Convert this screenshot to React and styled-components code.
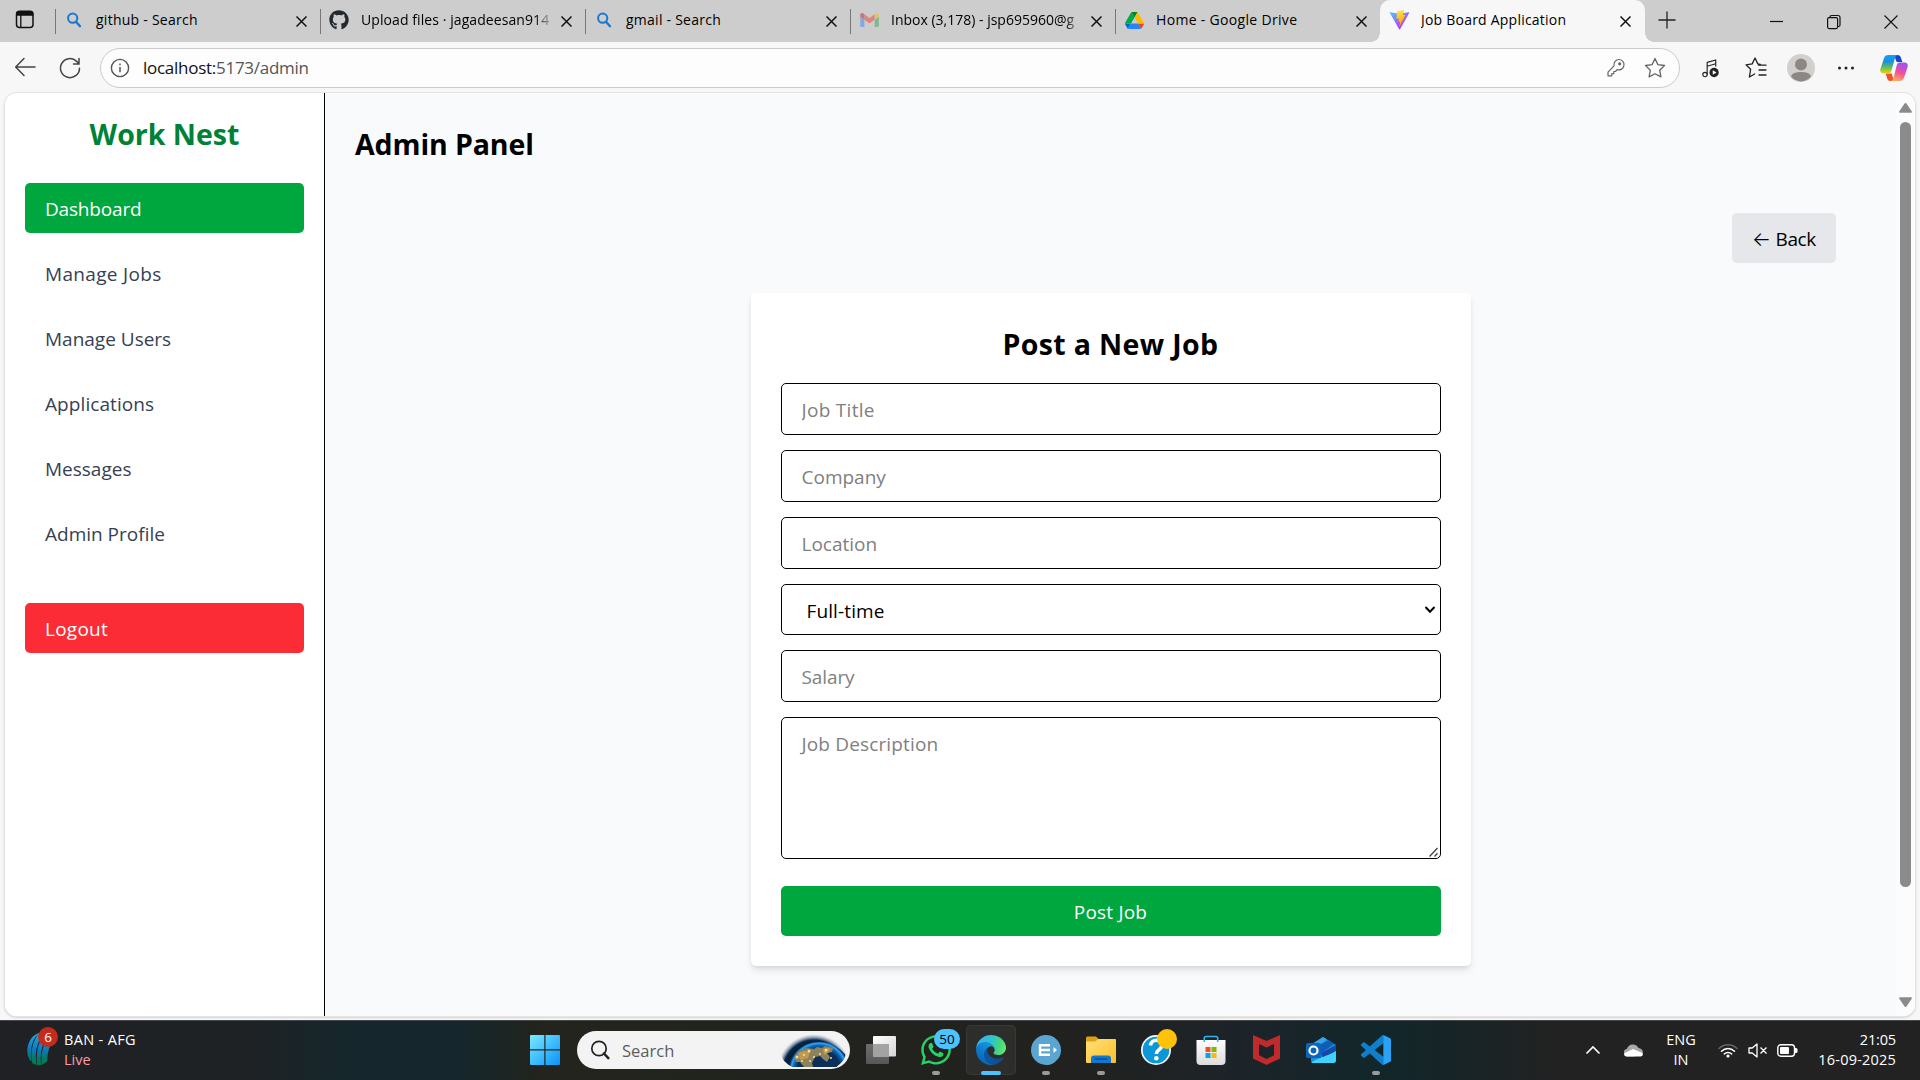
import React from "react";
import styled, { createGlobalStyle } from "styled-components";
import { FaGithub, FaWhatsapp } from "react-icons/fa";

const GlobalStyle = createGlobalStyle`
  *, *::before, *::after { box-sizing: border-box; }
  html, body { margin: 0; padding: 0; overflow: hidden; }
  body { font-family: "Open Sans", "Noto Sans", sans-serif; color: #000; }
  button, input, select, textarea { font: inherit; margin: 0; }
`;

const Screen = styled.div`
  width: 1920px;
  height: 1080px;
  display: flex;
  flex-direction: column;
  background: #f7f7f7;
`;

const T = styled.span`
  letter-spacing: ${(p) => p.$ls || 0}px;
`;

/* ---------- tab strip ---------- */
const TabStrip = styled.header`
  height: 42px;
  flex: none;
  display: flex;
  background: #cdcdcd;
`;
const TabActions = styled.div`
  width: 55px;
  display: flex;
  align-items: center;
  padding: 0 0 4px 15px;
`;
const Tab = styled.div`
  position: relative;
  width: 265px;
  height: 42px;
  display: flex;
  align-items: center;
  padding: 0 ${(p) => (p.$active ? 11 : 10)}px 2px 8px;
  background: ${(p) => (p.$active ? "#f7f7f7" : "transparent")};
  border-radius: 10px 10px 0 0;
  &::before {
    content: "";
    position: absolute;
    ${(p) =>
      p.$active
        ? "left: -9px; bottom: 0; width: 9px; height: 9px; background: radial-gradient(circle at 0 0, transparent 8.5px, #f7f7f7 9px);"
        : "left: 0; top: 9px; width: 1px; height: 25px; background: #777;"}
  }
  &::after {
    content: "";
    display: ${(p) => (p.$active ? "block" : "none")};
    position: absolute;
    right: -9px;
    bottom: 0;
    width: 9px;
    height: 9px;
    background: radial-gradient(circle at 100% 0, transparent 8.5px, #f7f7f7 9px);
  }
`;
const TabIcon = styled.span`
  width: 22px;
  height: 22px;
  flex: none;
  display: grid;
  place-items: center;
`;
const TabTitle = styled.span`
  flex: 1;
  margin-left: 11px;
  margin-right: 5px;
  height: 22px;
  line-height: 21px;
  font-size: 14px;
  letter-spacing: ${(p) => p.$ls || 0}px;
  white-space: nowrap;
  overflow: hidden;
  mask-image: ${(p) => (p.$fade ? "linear-gradient(90deg,#000 91%,transparent 101%)" : "none")};
`;
const TabClose = styled.span`
  width: 18px;
  height: 22px;
  display: grid;
  place-items: center;
  padding-top: 2px;
`;
const WindowTools = styled.div`
  flex: 1;
  display: flex;
  align-items: center;
  justify-content: space-between;
  padding: 0 20px 2px 13px;
`;
const WindowButtons = styled.div`
  display: flex;
  gap: 39px;
  padding-top: 3px;
`;

/* ---------- toolbar ---------- */
const Toolbar = styled.div`
  height: 51px;
  flex: none;
  display: flex;
  align-items: center;
  padding: 1px 0 0 13px;
`;
const NavButtons = styled.div`
  width: 87px;
  flex: none;
  display: flex;
  gap: 21px;
`;
const AddressBar = styled.div`
  width: 1580px;
  flex: none;
  height: 40px;
  display: flex;
  align-items: center;
  padding: 0 13px 0 9px;
  background: #fdfdfd;
  border: 1px solid #cbcbcb;
  border-radius: 20px;
`;
const Url = styled.span`
  flex: 1;
  margin-left: 13px;
  font-size: 17px;
  line-height: 24px;
  color: #555;
  letter-spacing: -0.27px;
  b { font-weight: 400; color: #111; }
`;
const BarIcons = styled.div`
  display: flex;
  gap: 18px;
`;
const ToolIcons = styled.div`
  flex: none;
  display: flex;
  padding-left: 8px;
`;
const ToolSlot = styled.span`
  width: 45px;
  height: 30px;
  margin-left: ${(p) => p.$push || 0}px;
  display: grid;
  place-items: center;
`;

/* ---------- page ---------- */
const Viewport = styled.div`
  flex: none;
  height: 923px;
  margin: 0 5px 4px;
  display: flex;
  overflow: hidden;
  background: #f9fafb;
  border-radius: 12px;
  box-shadow: 0 0 0 1px #e4e4e4, 0 1px 2px 1px #d4d4d4;
`;
const Sidebar = styled.aside`
  width: 320px;
  display: flex;
  flex-direction: column;
  padding: 20px;
  background: #fff;
  border-right: 1px solid #000;
`;
const Brand = styled.h2`
  margin: 0 0 30px;
  height: 40px;
  line-height: 42px;
  font-size: 28.5px;
  font-weight: 700;
  text-align: center;
  color: #008236;
`;
const NavList = styled.nav`
  display: flex;
  flex-direction: column;
  gap: 15px;
  margin-bottom: 45px;
`;
const NavItem = styled.a`
  height: 50px;
  padding: 0 20px;
  line-height: 53px;
  font-size: 19px;
  letter-spacing: ${(p) => p.$ls || 0}px;
  border-radius: 5px;
  color: ${(p) => (p.$bg ? "#fff" : "#364153")};
  background: ${(p) => p.$bg || "transparent"};
`;
const Main = styled.main`
  flex: 1;
  display: flex;
  flex-direction: column;
  padding: 30px 60px 0 30px;
`;
const PageTitle = styled.h1`
  margin: 0 0 50px;
  height: 40px;
  line-height: 42px;
  font-size: 28.5px;
  font-weight: 700;
`;
const BackButton = styled.button`
  align-self: flex-end;
  width: 104px;
  height: 50px;
  padding: 2px 20px 0;
  display: flex;
  align-items: center;
  justify-content: space-between;
  border: 0;
  border-radius: 5px;
  background: #e5e7eb;
  color: #000;
  font-size: 19px;
  letter-spacing: -0.35px;
`;
const Arrow = styled.span`
  font-family: "Inter", sans-serif;
  font-weight: 300;
  font-size: 20px;
  line-height: 24px;
`;
const Card = styled.form`
  align-self: center;
  width: 720px;
  height: 673px;
  margin: 30px 0 0 30px;
  padding: 30px;
  display: flex;
  flex-direction: column;
  gap: 15px;
  background: #fff;
  border-radius: 5px;
  box-shadow: 0 5px 7px -1px rgba(0, 0, 0, 0.1), 0 2px 5px -2px rgba(0, 0, 0, 0.1);
`;
const CardTitle = styled.h2`
  margin: 0 0 5px;
  height: 40px;
  line-height: 43px;
  font-size: 28.5px;
  font-weight: 700;
  text-align: center;
`;
const Field = styled.input`
  height: 52px;
  flex: none;
  padding: 1px 20px 0;
  border: 1px solid #000;
  border-radius: 5px;
  background: #fff;
  outline: 0;
  font-size: 19px;
  letter-spacing: ${(p) => p.$ls || 0}px;
  &::placeholder { color: #808080; opacity: 1; }
`;
const SelectField = styled.div`
  height: 51px;
  flex: none;
  padding: 0 4px 0 25px;
  display: flex;
  align-items: center;
  justify-content: space-between;
  border: 1px solid #000;
  border-radius: 5px;
  font-size: 19px;
`;
const SelectValue = styled.span`
  padding-top: 2px;
  letter-spacing: 0.12px;
`;
const AreaWrap = styled.div`
  position: relative;
  height: 142px;
  flex: none;
  display: flex;
`;
const Grip = styled.span`
  position: absolute;
  right: 2px;
  bottom: 2px;
  width: 10px;
  height: 10px;
  line-height: 0;
`;
const Area = styled.textarea`
  flex: 1;
  padding: 11px 20px;
  border: 1px solid #000;
  border-radius: 5px;
  outline: 0;
  resize: none;
  font-size: 19px;
  line-height: 30px;
  letter-spacing: ${(p) => p.$ls || 0}px;
  &::placeholder { color: #808080; opacity: 1; }
`;
const SubmitButton = styled.button`
  height: 50px;
  margin-top: 12px;
  border: 0;
  border-radius: 5px;
  background: #00a63e;
  color: #fff;
  font-size: 19px;
  letter-spacing: 0.2px;
  padding: 1px 0 0;
`;
const ScrollTrack = styled.div`
  width: 19px;
  display: flex;
  flex-direction: column;
  align-items: center;
  padding: 10px 0 9px 0;
  background: #fcfcfc;
`;
const ScrollThumb = styled.div`
  width: 11px;
  height: 765px;
  margin: 9px 0 auto;
  border-radius: 6px;
  background: #8b8b8b;
`;

/* ---------- taskbar ---------- */
const Taskbar = styled.footer`
  height: 60px;
  flex: none;
  display: grid;
  grid-template-columns: 530px 1fr auto;
  align-items: center;
  padding-bottom: 1px;
  border-top: 1px solid #45484a;
  color: #fff;
  background: linear-gradient(90deg, #202124 0, #1e2225 250px, #15272c 350px, #15272c 460px, #22241d 540px,
    #21221f 1080px, #1d2328 1220px, #12272b 1380px, #162427 1440px, #222 1560px, #222 1920px);
`;
const Widget = styled.div`
  display: flex;
  align-items: center;
  padding-left: 26px;
`;
const WidgetArt = styled.div`
  position: relative;
  width: 38px;
  height: 44px;
  padding-top: 3px;
`;
const Stack = styled.div`
  display: flex;
  flex-direction: column;
  align-items: ${(p) => p.$align || "flex-start"};
  width: ${(p) => (p.$w ? p.$w + "px" : "auto")};
  margin-right: ${(p) => p.$gap || 0}px;
  padding-bottom: 1px;
  font-size: 14.5px;
  line-height: 20px;
  white-space: nowrap;
`;
const Live = styled.span`
  color: #ff99a4;
`;
const Badge = styled.span`
  position: absolute;
  display: grid;
  place-items: center;
  left: ${(p) => p.$x}px;
  top: ${(p) => p.$y}px;
  width: ${(p) => p.$w}px;
  height: 20px;
  line-height: 20px;
  border-radius: 10px;
  font-size: 13.5px;
  background: ${(p) => p.$bg};
  color: ${(p) => p.$fg};
`;
const Dock = styled.div`
  display: flex;
  align-items: center;
  height: 58px;
`;
const SearchBox = styled.div`
  width: 273px;
  height: 38px;
  margin: 0 6px 0 17px;
  padding: 0 3px 0 13px;
  display: flex;
  align-items: center;
  border-radius: 19px;
  overflow: hidden;
  background: #f3f3f3;
  color: #5c5c5c;
  font-size: 16.5px;
`;
const SearchLabel = styled.span`
  flex: 1;
  margin-left: 12px;
`;
const AppSlot = styled.div`
  position: relative;
  width: 50px;
  height: 50px;
  margin-right: 5px;
  display: grid;
  place-items: center;
  border-radius: 5px;
  background: ${(p) => (p.$active ? "#2d2d2c" : "transparent")};
  box-shadow: ${(p) => (p.$active ? "inset 0 0 0 1px #383838" : "none")};
  &::after {
    content: "";
    display: ${(p) => (p.$running ? "block" : "none")};
    position: absolute;
    bottom: 0;
    left: ${(p) => (p.$active ? 15 : 21)}px;
    width: ${(p) => (p.$active ? 20 : 8)}px;
    height: 4px;
    border-radius: 2px;
    background: ${(p) => (p.$active ? "#4cc2ff" : "#9a9a9a")};
  }
`;
const Tray = styled.div`
  display: flex;
  align-items: center;
  padding-right: 24px;
`;
const TrayIcon = styled.span`
  display: grid;
  place-items: center;
  width: ${(p) => p.$w}px;
  margin-right: ${(p) => p.$gap}px;
`;

/* ---------- icons ---------- */
const Cross = ({ s = 11, w = 1.5 }) => (
  <svg width={s} height={s} viewBox="0 0 11 11" stroke="#111" strokeWidth={w} fill="none">
    <path d="M.5 .5l10 10M10.5 .5l-10 10" />
  </svg>
);
const BlueSearch = () => (
  <svg width="16" height="16" viewBox="0 0 16 16" fill="none" stroke="#1877d2">
    <circle cx="6.7" cy="6.2" r="4.6" strokeWidth="2" />
    <path d="M10 9.8l4 4.4" strokeWidth="2.4" strokeLinecap="round" />
  </svg>
);
const Gmail = () => (
  <svg width="19" height="14" viewBox="52 42 88 66" opacity=".5">
    <path fill="#4285f4" d="M58 108h14V74L52 59v43c0 3.32 2.69 6 6 6" />
    <path fill="#34a853" d="M120 108h14c3.32 0 6-2.69 6-6V59l-20 15" />
    <path fill="#fbbc04" d="M120 48v26l20-15v-8c0-7.42-8.47-11.65-14.4-7.2" />
    <path fill="#ea4335" d="M72 74V48l24 18 24-18v26L96 92" />
    <path fill="#c5221f" d="M52 51v8l20 15V48l-5.6-4.2c-5.94-4.45-14.4-.22-14.4 7.2" />
  </svg>
);
const Drive = () => (
  <svg width="19" height="17" viewBox="0 0 87.3 78">
    <path fill="#0066da" d="m6.6 66.85 3.85 6.65c.8 1.4 1.95 2.5 3.3 3.3l13.75-23.8h-27.5c0 1.55.4 3.1 1.2 4.5z" />
    <path fill="#00ac47" d="m43.65 25-13.75-23.8c-1.35.8-2.5 1.9-3.3 3.3l-25.4 44a9.06 9.06 0 0 0 -1.2 4.5h27.5z" />
    <path fill="#ea4335" d="m73.55 76.8c1.35-.8 2.5-1.9 3.3-3.3l1.6-2.75 7.65-13.25c.8-1.4 1.2-2.95 1.2-4.5h-27.502l5.852 11.5z" />
    <path fill="#00832d" d="m43.65 25 13.75-23.8c-1.35-.8-2.9-1.2-4.5-1.2h-18.5c-1.6 0-3.15.45-4.5 1.2z" />
    <path fill="#2684fc" d="m59.8 53h-32.3l-13.75 23.8c1.35.8 2.9 1.2 4.5 1.2h50.8c1.6 0 3.15-.45 4.5-1.2z" />
    <path fill="#ffba00" d="m73.4 26.5-12.7-22c-.8-1.4-1.95-2.5-3.3-3.3l-13.75 23.8 16.15 28h27.45c0-1.55-.4-3.1-1.2-4.5z" />
  </svg>
);
const Vite = () => (
  <svg width="21" height="20" viewBox="0 0 410 404">
    <defs>
      <linearGradient id="va" x1="6" y1="33" x2="235" y2="344" gradientUnits="userSpaceOnUse">
        <stop stopColor="#41D1FF" /><stop offset="1" stopColor="#BD34FE" />
      </linearGradient>
      <linearGradient id="vb" x1="194" y1="9" x2="236" y2="292" gradientUnits="userSpaceOnUse">
        <stop stopColor="#FFEA83" /><stop offset=".08" stopColor="#FFDD35" /><stop offset="1" stopColor="#FFA800" />
      </linearGradient>
    </defs>
    <path fill="url(#va)" d="M399.641 59.5246L215.643 388.545C211.844 395.338 202.084 395.378 198.228 388.618L10.5817 59.5563C6.38087 52.1896 12.6802 43.2665 21.0281 44.7586L205.223 77.6824C206.398 77.8924 207.601 77.8904 208.776 77.6763L389.119 44.8058C397.439 43.2894 403.768 52.1434 399.641 59.5246Z" />
    <path fill="url(#vb)" d="M292.965 1.5744L156.801 28.2552C154.563 28.6937 152.906 30.5903 152.771 32.8664L144.395 174.33C144.198 177.662 147.258 180.248 150.51 179.498L188.42 170.749C191.967 169.931 195.172 173.055 194.443 176.622L183.18 231.775C182.422 235.487 185.907 238.661 189.532 237.56L212.947 230.446C216.577 229.344 220.065 232.527 219.297 236.242L201.398 322.875C200.278 328.294 207.486 331.249 210.492 326.603L212.5 323.5L323.454 102.072C325.312 98.3645 322.108 94.137 318.036 94.9228L279.014 102.454C275.347 103.161 272.227 99.746 273.262 96.1583L298.731 7.86689C299.767 4.27314 296.636 0.855181 292.965 1.5744Z" />
  </svg>
);
const PanelIcon = () => (
  <svg width="20" height="19" viewBox="0 0 20 19" fill="none">
    <rect x="1.5" y="1.2" width="16.5" height="16.3" rx="3" stroke="#111" strokeWidth="1.5" />
    <path d="M1.2 5.8V4a3 3 0 0 1 3-3h11a3 3 0 0 1 3 3v1.8z" fill="#111" />
    <path d="M5.8 5v12.5" stroke="#111" strokeWidth="1.3" />
  </svg>
);
const BackIcon = () => (
  <svg width="24" height="22" viewBox="0 0 24 22" fill="none" stroke="#444" strokeWidth="1.5">
    <path d="M22 11H3M11 2.5L2.7 11l8.3 8.5" strokeLinecap="round" strokeLinejoin="round" />
  </svg>
);
const RefreshIcon = () => (
  <svg width="24" height="24" viewBox="0 0 24 24" fill="none" stroke="#444" strokeWidth="1.5">
    <path d="M21.5 12.2a9.5 9.5 0 1 1-2.8-6.8l1.8 1.8M21 2.5V8h-5.5" strokeLinecap="round" />
  </svg>
);
const InfoIcon = () => (
  <svg width="20" height="20" viewBox="0 0 20 20" fill="none" stroke="#555" strokeWidth="1.4">
    <circle cx="10" cy="10" r="8.6" />
    <path d="M10 9v5.2M10 5.6v1.6" strokeWidth="1.5" />
  </svg>
);
const KeyIcon = () => (
  <svg width="20" height="22" viewBox="0 0 20 22" fill="none" stroke="#666" strokeWidth="1.2">
    <path d="M12.5 2.5a5.2 5.2 0 1 1-1.4 10.1l-1.6 1.9H7.8v2.2H5.9l-.3 2.1H2v-3.6l6-6.4a5.4 5.4 0 0 1 4.5-6.3z" strokeLinejoin="round" />
    <circle cx="13.7" cy="6.8" r="1" fill="#666" />
  </svg>
);
const StarIcon = ({ c = "#666" }) => (
  <svg width="22" height="22" viewBox="0 0 22 22" fill="none" stroke={c} strokeWidth="1.3" strokeLinejoin="round">
    <path d="M11 1.5l2.9 6.1 6.6.9-4.8 4.7 1.2 6.7L11 16.7l-5.9 3.2 1.2-6.7L1.5 8.5l6.6-.9z" />
  </svg>
);
const MusicIcon = () => (
  <svg width="19" height="21" viewBox="0 0 20 22" fill="none" stroke="#222" strokeWidth="1.2">
    <circle cx="4.2" cy="17.4" r="2.3" />
    <path d="M6.5 17.4V4.6l9-2.6v7M6.5 8.6l9-2.6" strokeLinejoin="round" />
    <circle cx="13.8" cy="15.2" r="4.9" fill="#222" stroke="none" />
    <path d="M12.4 12.8v4.8l3.9-2.4z" fill="#fff" stroke="none" />
  </svg>
);
const FavoritesIcon = () => (
  <svg width="24" height="24" viewBox="0 0 24 24" fill="none" stroke="#222" strokeWidth="1.3" strokeLinejoin="round" strokeLinecap="round">
    <path d="M16.3 8.3l-2.5-.4L11 2 8.2 7.9l-6.2.9 4.6 4.5-1.2 7.7 5.2-3M14.5 9.2h7.5M15 14h7M15 19h7" />
  </svg>
);
const AvatarIcon = () => (
  <svg width="28" height="28" viewBox="0 0 28 28">
    <circle cx="14" cy="14" r="14" fill="#d2d0ce" />
    <circle cx="14" cy="10.5" r="6" fill="#8d8884" />
    <path d="M4 22.5C5 19 9 18 14 18s9 1 10 4.5A14 14 0 0 1 14 27.5 14 14 0 0 1 4 22.5z" fill="#8d8884" />
  </svg>
);
const DotsIcon = () => (
  <svg width="18" height="6" viewBox="0 0 18 6" fill="#222">
    <circle cx="2.5" cy="3" r="1.5" /><circle cx="9" cy="3" r="1.5" /><circle cx="15.5" cy="3" r="1.5" />
  </svg>
);
const CopilotIcon = () => (
  <svg width="28" height="28" viewBox="0 0 28 28">
    <defs>
      <linearGradient id="ca" x1="0" y1="0" x2="0" y2="1">
        <stop stopColor="#1b9df5" /><stop offset=".35" stopColor="#1a8fe0" /><stop offset=".7" stopColor="#6fc04a" /><stop offset="1" stopColor="#f2d20c" />
      </linearGradient>
      <linearGradient id="cb" x1="0.6" y1="0" x2="0.3" y2="1">
        <stop stopColor="#9b55f5" /><stop offset=".5" stopColor="#ee4f9c" /><stop offset="1" stopColor="#ffae5c" />
      </linearGradient>
    </defs>
    <path d="M14 1h3.5c2 0 3 1.3 3.5 3l1.3 4h-5.6z" fill="#1447c8" />
    <path d="M14 27h-3.5c-2 0-3-1.3-3.5-3l-1.3-4.5h6z" fill="#f0502a" />
    <path d="M8.5 1H18c-1.8 0-2.6 1.5-3 3l-3.7 13c-.5 1.7-1.5 2.5-3 2.5H3.5C1 19.5-.2 17.8.4 15L4 4.2C4.7 2.2 6 1 8.5 1z" fill="url(#ca)" />
    <path d="M19.5 27H10.5c1.8 0 2.6-1.5 3-3l3.3-13c.5-1.7 1.5-2.5 3-2.5h4.7c2.5 0 3.7 1.7 3.1 4.5L24 23.8c-.7 2-2 3.2-4.5 3.2z" fill="url(#cb)" />
  </svg>
);
const Chevron = () => (
  <svg width="12" height="10" viewBox="0 0 12 10" fill="none" stroke="#000" strokeWidth="2">
    <path d="M1.5 2l4.5 4.7L10.5 2" />
  </svg>
);
const ScrollArrow = ({ down }) => (
  <svg width="13" height="10" viewBox="0 0 13 10" fill="#8b8b8b">
    <path d={down ? "M1 .3h11c.9 0 1.2.8.7 1.5L7.8 9c-.7 1.2-1.9 1.2-2.6 0L.3 1.8C-.2 1.1.1.3 1 .3z" : "M1 9.7h11c.9 0 1.2-.8.7-1.5L7.8 1c-.7-1.2-1.9-1.2-2.6 0L.3 8.2c-.5.7-.2 1.5.7 1.5z"} />
  </svg>
);
const BallIcon = () => (
  <svg width="28" height="36" viewBox="0 0 28 36">
    <defs>
      <linearGradient id="bl" x1="0" y1="0" x2="0" y2="36" gradientUnits="userSpaceOnUse">
        <stop stopColor="#1fb4e8" /><stop offset=".5" stopColor="#0b7cc0" /><stop offset=".75" stopColor="#08766a" /><stop offset="1" stopColor="#067a42" />
      </linearGradient>
      <clipPath id="bc"><ellipse cx="14" cy="18" rx="12.5" ry="16.5" transform="rotate(12 14 18)" /></clipPath>
    </defs>
    <g clipPath="url(#bc)" fill="none" stroke="url(#bl)" strokeWidth="4.4">
      <path d="M12 0C4 6 1 15 3 30" strokeWidth="5" /><path d="M17 1C9 9 6 20 8.5 34" />
      <path d="M20.5 3C14 12 11 22 13.5 36" strokeWidth="4" /><path d="M26 6C20 14 17 24 19 36" strokeWidth="6" />
    </g>
  </svg>
);
const WinLogo = () => (
  <svg width="30" height="30" viewBox="0 0 30 30">
    <defs>
      <linearGradient id="wl" x1="0" y1="0" x2="30" y2="30" gradientUnits="userSpaceOnUse">
        <stop stopColor="#7ceaff" /><stop offset=".5" stopColor="#3fbfff" /><stop offset="1" stopColor="#0a93f8" />
      </linearGradient>
    </defs>
    <path fill="url(#wl)" d="M1 0h13.3v14.3H0V1a1 1 0 0 1 1-1zM15.5 0H29a1 1 0 0 1 1 1v13.3H15.5zM0 15.5h14.3V30H1a1 1 0 0 1-1-1zM15.5 15.5H30V29a1 1 0 0 1-1 1H15.5z" />
  </svg>
);
const SearchGlyph = () => (
  <svg width="20" height="20" viewBox="0 0 20 20" fill="none" stroke="#222">
    <circle cx="9" cy="8.5" r="7.2" strokeWidth="1.7" />
    <path d="M14 13.5l4.3 4.7" strokeWidth="2.5" strokeLinecap="round" />
  </svg>
);
const Earth = () => (
  <svg width="66" height="38" viewBox="0 0 66 38">
    <defs>
      <radialGradient id="ea" cx="33" cy="40" r="37" gradientUnits="userSpaceOnUse">
        <stop offset=".72" stopColor="#04182f" /><stop offset=".84" stopColor="#0a2a4c" /><stop offset="1" stopColor="#8da4bb" stopOpacity="0" />
      </radialGradient>
      <radialGradient id="eb" cx="38" cy="40" r="31" gradientUnits="userSpaceOnUse">
        <stop offset=".7" stopColor="#0b2f59" /><stop offset=".82" stopColor="#0d62ae" /><stop offset=".9" stopColor="#2ba5ff" /><stop offset=".97" stopColor="#0a2a4c" />
      </radialGradient>
      <clipPath id="ec"><path d="M0 22C8 8 20 3 36 3c15 0 25 6 29 14 1 8-3 14-10 19H12C5 33 0 28 0 22z" /></clipPath>
    </defs>
    <g clipPath="url(#ec)">
      <ellipse cx="33" cy="30" rx="38" ry="28" fill="url(#ea)" />
      <ellipse cx="38" cy="38" rx="31" ry="27" fill="url(#eb)" />
      <path d="M13 27l5-7 8-3 7 1 3-2 5 1 3-2 8 2-1 4-5 1 3 4-3 5-4-3-3-3-5 1-3 6 1 4h-9l-4-5-4 0z" fill="#8b8260" />
      <path d="M17 22l6-2 6 1-2 6-8 2z" fill="#c19a4d" /><path d="M42 18l7-1-1 4-5 3z" fill="#c19a4d" />
      <g fill="#ffe08a">
        <circle cx="16" cy="26" r="1.5" /><circle cx="23" cy="24" r="1" /><circle cx="28" cy="20" r="1.5" /><circle cx="21" cy="30" r="1" />
        <circle cx="33" cy="26" r="1" /><circle cx="45" cy="19" r="1.5" /><circle cx="39" cy="23" r="1" /><circle cx="50" cy="27" r="1" /><circle cx="29" cy="30" r="1" />
      </g>
    </g>
  </svg>
);
const TaskView = () => (
  <svg width="32" height="30" viewBox="0 0 32 30">
    <defs>
      <linearGradient id="tv" x1="0" y1="0" x2="1" y2="1"><stop stopColor="#fff" /><stop offset="1" stopColor="#d5d5d5" /></linearGradient>
      <linearGradient id="tw" x1="0" y1="0" x2="0" y2="1"><stop stopColor="#6d6d6d" /><stop offset="1" stopColor="#585858" /></linearGradient>
    </defs>
    <rect x="1" y="9" width="23" height="20" rx="1" fill="url(#tw)" />
    <rect x="8" y="1" width="23" height="20.5" rx="1" fill="url(#tv)" />
    <rect x="8" y="9" width="16" height="12.5" fill="#a3a3a3" />
  </svg>
);
const Edge = () => (
  <svg width="30" height="30" viewBox="4.6 4.9 256 256">
    <defs>
      <linearGradient id="e1" x1="63" y1="178" x2="241" y2="178" gradientUnits="userSpaceOnUse"><stop stopColor="#0c59a4" /><stop offset="1" stopColor="#114a8b" /></linearGradient>
      <linearGradient id="e2" x1="155" y1="75" x2="46" y2="220" gradientUnits="userSpaceOnUse"><stop stopColor="#1b9de2" /><stop offset=".4" stopColor="#1387d8" /><stop offset="1" stopColor="#0669bc" /></linearGradient>
      <linearGradient id="e3" x1="20" y1="70" x2="255" y2="130" gradientUnits="userSpaceOnUse"><stop stopColor="#35b5ee" /><stop offset=".45" stopColor="#2fc2d0" /><stop offset=".75" stopColor="#43d480" /><stop offset="1" stopColor="#66eb6e" /></linearGradient>
    </defs>
    <path fill="url(#e1)" d="M235.68,195.46a93.73,93.73,0,0,1-10.54,4.71,101.87,101.87,0,0,1-35.9,6.46c-47.32,0-88.54-32.55-88.54-74.32A31.48,31.48,0,0,1,117.13,105c-42.8,1.8-53.8,46.4-53.8,72.53,0,73.88,68.09,81.37,82.76,81.37,7.91,0,19.84-2.3,27-4.56l1.31-.44A128.34,128.34,0,0,0,241,201.1,4,4,0,0,0,235.68,195.46Z" />
    <path fill="url(#e2)" d="M110.34,246.34A79.2,79.2,0,0,1,87.6,225,80.72,80.72,0,0,1,117.13,105c3.12-1.47,8.45-4.13,15.54-4a32.35,32.35,0,0,1,25.69,13,31.88,31.88,0,0,1,6.36,18.66c0-.21,24.46-79.6-80-79.6-43.9,0-80,41.66-80,78.21a130.15,130.15,0,0,0,12.11,56,128,128,0,0,0,156.38,67.11,75.55,75.55,0,0,1-62.78-8Z" />
    <path fill="url(#e3)" d="M156.94,153.78c-.81,1.05-3.3,2.5-3.3,5.66,0,2.61,1.7,5.12,4.72,7.23,14.38,10,41.49,8.68,41.56,8.68a59.56,59.56,0,0,0,30.27-8.35A61.38,61.38,0,0,0,260.43,114.2c.26-22.41-8-37.31-11.34-43.91C228,28.92,182.35,4.92,132.69,4.92a128,128,0,0,0-128,126.2c.48-36.54,36.8-66.05,80-66.05,3.5,0,23.46.34,42,10.07,16.34,8.58,24.9,18.94,30.85,29.21,6.18,10.67,7.28,24.15,7.28,29.52S162.05,147.2,156.94,153.78Z" />
  </svg>
);
const EApp = () => (
  <svg width="30" height="30" viewBox="0 0 30 30">
    <path d="M15 0a15 15 0 0 1 15 15c0 6-3 9-6 12-3 2.5-6 3-9 3A15 15 0 0 1 15 0z" fill="#5aa5d2" />
    <path d="M19 10.2H9v9.6h10M9 15h10" fill="none" stroke="#fff" strokeWidth="2.4" />
    <path d="M22.5 12l3.5 3-3.5 3z" fill="#fff" />
  </svg>
);
const Folder = () => (
  <svg width="30" height="28" viewBox="0 0 30 28">
    <defs><linearGradient id="fo" x1="0" y1="0" x2="1" y2="1"><stop stopColor="#ffe07a" /><stop offset="1" stopColor="#fcbf28" /></linearGradient></defs>
    <path d="M0 2a1.5 1.5 0 0 1 1.5-1.5h8c1.5 0 2.5 3 4.5 3V10H0z" fill="#e0a010" />
    <path d="M0 5.5h8.5c2 0 2.5-2.5 4.5-2.5H29a1 1 0 0 1 1 1v22a1 1 0 0 1-1 1H1a1 1 0 0 1-1-1z" fill="url(#fo)" />
    <path d="M5 27v-4.5c0-2 1-3 3-3h14c2 0 3 1 3 3V27z" fill="#1277d0" />
    <path d="M9 23h12" stroke="#0a4f95" strokeWidth="1.3" strokeLinecap="round" />
  </svg>
);
const Help = () => (
  <svg width="30" height="30" viewBox="0 0 30 30">
    <circle cx="15" cy="15" r="15" fill="#f4fbff" />
    <circle cx="15" cy="15" r="13.3" fill="#0c97d8" />
    <path d="M9.5 10.5c.3-3.5 3-5.3 6-5.3 3.4 0 5.5 2 5.5 4.7 0 4.6-5.7 4.7-5.7 9" fill="none" stroke="#fff" strokeWidth="3.6" />
    <circle cx="15.3" cy="23.2" r="2.3" fill="#fff" />
  </svg>
);
const Store = () => (
  <svg width="30" height="30" viewBox="0 0 30 30">
    <defs><linearGradient id="st" x1="0" y1="0" x2="0" y2="1"><stop stopColor="#fff" /><stop offset="1" stopColor="#dcdcdc" /></linearGradient></defs>
    <path d="M.5 5h29v21a4 4 0 0 1-4 4h-21a4 4 0 0 1-4-4z" fill="url(#st)" />
    <path d="M8.3 7V3.2c0-1 .5-1.7 1.7-1.7h10c1.2 0 1.7.7 1.7 1.7V7" fill="none" stroke="#2cb5ee" strokeWidth="1.6" />
    <path fill="#f25022" d="M9.5 12h5v5h-5z" /><path fill="#7fba00" d="M15.5 12h5v5h-5z" />
    <path fill="#00a4ef" d="M9.5 18h5v5h-5z" /><path fill="#ffb900" d="M15.5 18h5v5h-5z" />
  </svg>
);
const McAfee = () => (
  <svg width="27" height="30" viewBox="0 0 27 30">
    <path d="M0 0l13.5 6L27 0v23.5L13.5 30 0 23.5zM6 9v11.3l7.5 3.6 7.5-3.6V9l-7.5 3.4z" fill="#c12a2c" fillRule="evenodd" />
  </svg>
);
const Outlook = () => (
  <svg width="30" height="28" viewBox="0 0 30 28">
    <path d="M5 9L17 1l13 8v15a3 3 0 0 1-3 3H8a3 3 0 0 1-3-3z" fill="#1490df" />
    <path d="M6 8L17 1l4 2.5L9 12z" fill="#3ca4e8" /><path d="M12 10L23 4l5 4-13 9z" fill="#0f5bb5" />
    <path d="M15 17L30 9v8L17 23z" fill="#1648a8" />
    <path d="M5 27c3-4 17-7 25-12v9a3 3 0 0 1-3 3z" fill="#3fd2fb" />
    <rect x="0" y="7" width="15" height="15" rx="1.5" fill="#0d64bd" />
    <circle cx="7.5" cy="14.5" r="4" fill="none" stroke="#fff" strokeWidth="2.2" />
  </svg>
);
const VsCode = () => (
  <svg width="30" height="30" viewBox="0 0 24 24">
    <path fill="#0f7fcc" d="M23.15 2.587L18.21.21a1.494 1.494 0 0 0-1.705.29l-9.46 8.63-4.12-3.128a.999.999 0 0 0-1.276.057L.327 7.261A1 1 0 0 0 .326 8.74L3.899 12 .326 15.26a1 1 0 0 0 .001 1.479L1.65 17.94a.999.999 0 0 0 1.276.057l4.12-3.128 9.46 8.63a1.492 1.492 0 0 0 1.704.29l4.942-2.377A1.5 1.5 0 0 0 24 20.06V3.939a1.5 1.5 0 0 0-.85-1.352zm-5.146 14.861L10.826 12l7.178-5.448v10.896z" />
    <path fill="#2ba3f5" d="M18 .2l5.15 2.387A1.5 1.5 0 0 1 24 3.939V20.06a1.5 1.5 0 0 1-.85 1.352L18 23.8z" />
  </svg>
);
const WifiIcon = () => (
  <svg width="20" height="15" viewBox="0 0 20 15" fill="none" strokeWidth="1.5" strokeLinecap="round">
    <path d="M1 5.5a12.5 12.5 0 0 1 18 0" stroke="#666" />
    <path d="M3.5 8.3a9 9 0 0 1 13 0M6.3 11a5.3 5.3 0 0 1 7.4 0" stroke="#fff" />
    <circle cx="10" cy="13" r="1.6" fill="#fff" />
  </svg>
);
const MuteIcon = () => (
  <svg width="20" height="15" viewBox="0 0 20 15" fill="none" stroke="#fff" strokeWidth="1.3" strokeLinejoin="round">
    <path d="M1 5h3.2L9 1v13l-4.8-4H1zM12.5 4.5l6 6M18.5 4.5l-6 6" />
  </svg>
);
const BatteryIcon = () => (
  <svg width="21" height="13" viewBox="0 0 21 13">
    <rect x=".8" y=".8" width="16.7" height="11.4" rx="3" fill="none" stroke="#fff" strokeWidth="1.4" />
    <rect x="3" y="3" width="9" height="7" rx="1" fill="#fff" />
    <path d="M18 4h1a1.5 1.5 0 0 1 1.5 1.5v2A1.5 1.5 0 0 1 19 9h-1z" fill="#fff" />
  </svg>
);
const CloudIcon = () => (
  <svg width="20" height="13" viewBox="0 0 20 13">
    <path d="M4 12.5A4 4 0 0 1 4 4.7 6.2 6.2 0 0 1 15.5 4c2.5.3 4.5 2 4.5 4.5l-9 4z" fill="#a9a9a9" />
    <path d="M3.5 12.5C1 12 .5 10 2 9l8-4 9.5 4c1 1.5 0 3.5-2 3.5z" fill="#fff" />
  </svg>
);

const tabs = [
  { icon: <BlueSearch />, title: "github - Search", ls: 0.25 },
  { icon: <FaGithub size={20} color="#24292f" />, title: "Upload files · jagadeesan914", fade: true, ls: 0.08 },
  { icon: <BlueSearch />, title: "gmail - Search", ls: 0.25 },
  { icon: <Gmail />, title: "Inbox (3,178) - jsp695960@g", fade: true },
  { icon: <Drive />, title: "Home - Google Drive", ls: 0.32 },
  { icon: <Vite />, title: "Job Board Application", active: true, ls: 0.22 },
];

export default function App() {
  return (
    <Screen>
      <GlobalStyle />
      <TabStrip>
        <TabActions><PanelIcon /></TabActions>
        {tabs.map((t, i) => (
          <Tab key={i} $active={t.active}>
            <TabIcon>{t.icon}</TabIcon>
            <TabTitle $fade={t.fade} $ls={t.ls}>{t.title}</TabTitle>
            <TabClose><Cross /></TabClose>
          </Tab>
        ))}
        <WindowTools>
          <svg width="18" height="18" viewBox="0 0 18 18" stroke="#222" strokeWidth="1.3"><path d="M9 .5v17M.5 9h17" /></svg>
          <WindowButtons>
            <svg width="18" height="18" viewBox="0 0 18 18" stroke="#111" strokeWidth="1.2"><path d="M2 8.5h13" /></svg>
            <svg width="18" height="18" viewBox="0 0 18 18" stroke="#111" strokeWidth="1.2" fill="none">
              <rect x="2.6" y="4.6" width="10" height="11" rx="1.5" /><path d="M5 4.5V4A1.5 1.5 0 0 1 6.5 2.5H13A2 2 0 0 1 15 4.5V12a1.5 1.5 0 0 1-1.5 1.5h-.5" />
            </svg>
            <svg width="18" height="18" viewBox="0 0 18 18" stroke="#111" strokeWidth="1.1"><path d="M2.5 2.5l13 13M15.5 2.5l-13 13" /></svg>
          </WindowButtons>
        </WindowTools>
      </TabStrip>

      <Toolbar>
        <NavButtons><BackIcon /><RefreshIcon /></NavButtons>
        <AddressBar>
          <InfoIcon />
          <Url><b>localhost:</b>5173/admin</Url>
          <BarIcons><KeyIcon /><StarIcon /></BarIcons>
        </AddressBar>
        <ToolIcons>
          <ToolSlot><MusicIcon /></ToolSlot>
          <ToolSlot><FavoritesIcon /></ToolSlot>
          <ToolSlot><AvatarIcon /></ToolSlot>
          <ToolSlot><DotsIcon /></ToolSlot>
          <ToolSlot $push={3}><CopilotIcon /></ToolSlot>
        </ToolIcons>
      </Toolbar>

      <Viewport>
        <Sidebar>
          <Brand><T>Work Nest</T></Brand>
          <NavList>
            <NavItem $bg="#00a63e" $ls={-0.18}>Dashboard</NavItem>
            <NavItem $ls={0.33}>Manage Jobs</NavItem>
            <NavItem>Manage Users</NavItem>
            <NavItem $ls={0.08}>Applications</NavItem>
            <NavItem>Messages</NavItem>
            <NavItem>Admin Profile</NavItem>
          </NavList>
          <NavItem $bg="#fb2c36" $ls={0.25}>Logout</NavItem>
        </Sidebar>
        <Main>
          <PageTitle><T $ls={-0.1}>Admin Panel</T></PageTitle>
          <BackButton type="button"><Arrow>←</Arrow><span>Back</span></BackButton>
          <Card>
            <CardTitle><T $ls={0.35}>Post a New Job</T></CardTitle>
            <Field placeholder="Job Title" $ls={0.3} />
            <Field placeholder="Company" />
            <Field placeholder="Location" />
            <SelectField><SelectValue>Full-time</SelectValue><Chevron /></SelectField>
            <Field placeholder="Salary" $ls={-0.1} />
            <AreaWrap>
              <Area placeholder="Job Description" $ls={0.15} />
              <Grip>
                <svg width="10" height="10" viewBox="0 0 10 10" stroke="#444" strokeWidth="1.3"><path d="M.5 9.5l8-8.5M5.5 9.5l3-3.2" /></svg>
              </Grip>
            </AreaWrap>
            <SubmitButton type="button">Post Job</SubmitButton>
          </Card>
        </Main>
        <ScrollTrack><ScrollArrow /><ScrollThumb /><ScrollArrow down /></ScrollTrack>
      </Viewport>

      <Taskbar>
        <Widget>
          <WidgetArt><BallIcon /><Badge $x={12} $y={-1} $w={20} $bg="#c42b1c" $fg="#fff">6</Badge></WidgetArt>
          <Stack><T $ls={0.35}>BAN - AFG</T><Live>Live</Live></Stack>
        </Widget>
        <Dock>
          <WinLogo />
          <SearchBox><SearchGlyph /><SearchLabel>Search</SearchLabel><Earth /></SearchBox>
          <AppSlot><TaskView /></AppSlot>
          <AppSlot $running><FaWhatsapp size={34} color="#25d366" /><Badge $x={23} $y={4} $w={26} $bg="#4cc2ff" $fg="#000">50</Badge></AppSlot>
          <AppSlot $running $active><Edge /></AppSlot>
          <AppSlot $running><EApp /></AppSlot>
          <AppSlot $running><Folder /></AppSlot>
          <AppSlot><Help /><Badge $x={26} $y={4} $w={20} $bg="#ffc20a" $fg="#000" /></AppSlot>
          <AppSlot><Store /></AppSlot>
          <AppSlot><McAfee /></AppSlot>
          <AppSlot><Outlook /></AppSlot>
          <AppSlot $running><VsCode /></AppSlot>
        </Dock>
        <Tray>
          <TrayIcon $w={16} $gap={22}>
            <svg width="16" height="10" viewBox="0 0 16 10" fill="none" stroke="#fff" strokeWidth="1.6"><path d="M1.5 8.5L8 2l6.5 6.5" /></svg>
          </TrayIcon>
          <TrayIcon $w={20} $gap={23}><CloudIcon /></TrayIcon>
          <Stack $align="center" $w={30} $gap={22}><span>ENG</span><span>IN</span></Stack>
          <TrayIcon $w={20} $gap={10}><WifiIcon /></TrayIcon>
          <TrayIcon $w={20} $gap={9}><MuteIcon /></TrayIcon>
          <TrayIcon $w={21} $gap={20}><BatteryIcon /></TrayIcon>
          <Stack $align="flex-end" $w={78}><T $ls={-0.15}>21:05</T><T $ls={0.2}>16-09-2025</T></Stack>
        </Tray>
      </Taskbar>
    </Screen>
  );
}
